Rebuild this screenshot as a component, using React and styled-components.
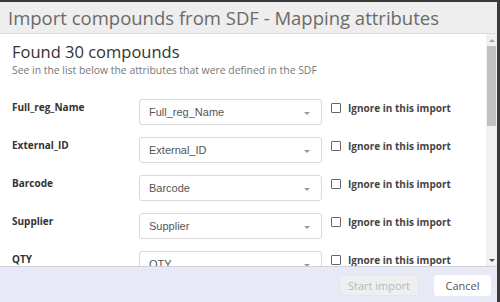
import styled, { createGlobalStyle } from "styled-components";

const Global = createGlobalStyle`
  html, body {
    margin: 0;
    padding: 0;
    background: #fff;
  }
  * { box-sizing: border-box; }
`;

const Dialog = styled.div`
  width: 500px;
  height: 302px;
  display: flex;
  flex-direction: column;
  border-top: 2px solid #3a3a3a;
  border-right: 3px solid #3a3a3a;
  overflow: hidden;
  font-family: "Open Sans", "Liberation Sans", sans-serif;
`;

const Header = styled.div`
  height: 32px;
  flex: none;
  background: #eeeeee;
  border-bottom: 1px solid #dcdcdc;
  display: flex;
  align-items: center;
  padding-left: 8px;
  font-size: 18.5px;
  color: #6a6a6a;
`;

const Body = styled.div`
  flex: 1;
  display: flex;
  min-height: 0;
`;

const Content = styled.div`
  flex: 1;
  overflow: hidden;
  padding: 8px 0 0 12px;
`;

const Title = styled.div`
  font-size: 16.5px;
  color: #333;
  line-height: 20px;
`;

const Sub = styled.div`
  font-size: 10.4px;
  color: #777;
  line-height: 14px;
  margin-top: 1px;
`;

const List = styled.div`
  margin-top: 22px;
  display: flex;
  flex-direction: column;
  gap: 12px;
`;

const Row = styled.div`
  display: flex;
  align-items: flex-start;
  height: 26px;
`;

const Label = styled.div`
  width: 127px;
  flex: none;
  font-size: 10px;
  font-weight: 700;
  color: #333;
  line-height: 14px;
  padding-top: 1px;
`;

const Select = styled.div`
  width: 183px;
  height: 26px;
  flex: none;
  border: 1px solid #d9d9d9;
  border-radius: 3px;
  background: #fff;
  display: flex;
  align-items: center;
  justify-content: space-between;
  padding: 0 11px 0 9px;
  font-family: "Liberation Sans", Arial, sans-serif;
  font-size: 11px;
  color: #555;
`;

const Caret = styled.span`
  width: 0;
  height: 0;
  border-left: 3px solid transparent;
  border-right: 3px solid transparent;
  border-top: 3px solid #999;
  margin-top: 2px;
`;

const Ignore = styled.label`
  display: flex;
  align-items: center;
  gap: 7px;
  margin-left: 9px;
  font-size: 10px;
  font-weight: 700;
  color: #444;
  line-height: 14px;
  margin-top: 2px;
`;

const Box = styled.span`
  width: 10px;
  height: 10px;
  border: 1px solid #666;
  border-radius: 1px;
  background: #fff;
`;

const Scroll = styled.div`
  width: 11px;
  flex: none;
  background: #f1f1f1;
  display: flex;
  flex-direction: column;
  align-items: center;
`;

const Arrow = styled.div`
  height: 12px;
  display: flex;
  align-items: center;
  justify-content: center;
  &::after {
    content: "";
    border-left: 3px solid transparent;
    border-right: 3px solid transparent;
    ${(p) => (p.$down ? "border-top: 3px solid #505050;" : "border-bottom: 3px solid #a3a3a3;")}
  }
`;

const Thumb = styled.div`
  width: 9px;
  height: 80px;
  background: #c1c1c1;
`;

const Track = styled.div`
  flex: 1;
`;

const Footer = styled.div`
  height: 36px;
  flex: none;
  background: #e8e9f6;
  border-top: 1px solid #d0d1dc;
  display: flex;
  justify-content: flex-end;
  align-items: flex-start;
  gap: 15px;
  padding: 8px 6px 0 0;
`;

const Button = styled.button`
  height: 21px;
  padding: 0;
  width: ${(p) => p.$w}px;
  border: 1px solid ${(p) => (p.disabled ? "#e6e6e6" : "#fff")};
  border-radius: 3px;
  background: ${(p) => (p.disabled ? "#eeeff0" : "#fff")};
  color: ${(p) => (p.disabled ? "#b8b8b8" : "#555")};
  font-family: "Open Sans", "Liberation Sans", sans-serif;
  font-size: 11px;
`;

const rows = ["Full_reg_Name", "External_ID", "Barcode", "Supplier", "QTY"];

export default function App() {
  return (
    <>
      <Global />
      <Dialog>
        <Header>Import compounds from SDF - Mapping attributes</Header>
        <Body>
          <Content>
            <Title>Found 30 compounds</Title>
            <Sub>See in the list below the attributes that were defined in the SDF</Sub>
            <List>
              {rows.map((r) => (
                <Row key={r}>
                  <Label>{r}</Label>
                  <Select>
                    <span>{r}</span>
                    <Caret />
                  </Select>
                  <Ignore>
                    <Box />
                    Ignore in this import
                  </Ignore>
                </Row>
              ))}
            </List>
          </Content>
          <Scroll>
            <Arrow />
            <Thumb />
            <Track />
            <Arrow $down />
          </Scroll>
        </Body>
        <Footer>
          <Button $w={80} disabled>Start import</Button>
          <Button $w={57}>Cancel</Button>
        </Footer>
      </Dialog>
    </>
  );
}
